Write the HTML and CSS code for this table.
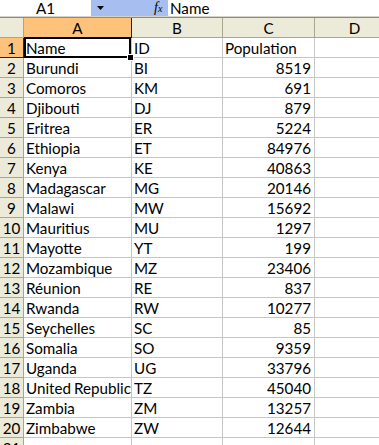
FILE: index.html
```html
<!DOCTYPE html>
<html>
<head>
<meta charset="utf-8">
<link rel="stylesheet" href="styles.css">
</head>
<body>
<div class="app">
  <div class="fbar">
    <div class="namebox">A1</div>
    <div class="fbtns">
      <svg class="arrow" width="7" height="4" viewBox="0 0 7 4"><path d="M0 0H7L3.5 4Z" fill="#000"/></svg>
      <span class="fx">f<span class="fxs">x</span></span>
    </div>
    <div class="finput">Name</div>
  </div>
  <div class="sheet">
    <div class="hc corner"></div><div class="hc col sel">A</div><div class="hc col">B</div><div class="hc col">C</div><div class="hc col">D</div>

    <div class="hc row sel">1</div><div class="c">Name</div><div class="c">ID</div><div class="c">Population</div><div class="c"></div>
    <div class="hc row">2</div><div class="c">Burundi</div><div class="c">BI</div><div class="c n">8519</div><div class="c"></div>
    <div class="hc row">3</div><div class="c">Comoros</div><div class="c">KM</div><div class="c n">691</div><div class="c"></div>
    <div class="hc row">4</div><div class="c">Djibouti</div><div class="c">DJ</div><div class="c n">879</div><div class="c"></div>
    <div class="hc row">5</div><div class="c">Eritrea</div><div class="c">ER</div><div class="c n">5224</div><div class="c"></div>
    <div class="hc row">6</div><div class="c">Ethiopia</div><div class="c">ET</div><div class="c n">84976</div><div class="c"></div>
    <div class="hc row">7</div><div class="c">Kenya</div><div class="c">KE</div><div class="c n">40863</div><div class="c"></div>
    <div class="hc row">8</div><div class="c">Madagascar</div><div class="c">MG</div><div class="c n">20146</div><div class="c"></div>
    <div class="hc row">9</div><div class="c">Malawi</div><div class="c">MW</div><div class="c n">15692</div><div class="c"></div>
    <div class="hc row">10</div><div class="c">Mauritius</div><div class="c">MU</div><div class="c n">1297</div><div class="c"></div>
    <div class="hc row">11</div><div class="c">Mayotte</div><div class="c">YT</div><div class="c n">199</div><div class="c"></div>
    <div class="hc row">12</div><div class="c">Mozambique</div><div class="c">MZ</div><div class="c n">23406</div><div class="c"></div>
    <div class="hc row">13</div><div class="c">Réunion</div><div class="c">RE</div><div class="c n">837</div><div class="c"></div>
    <div class="hc row">14</div><div class="c">Rwanda</div><div class="c">RW</div><div class="c n">10277</div><div class="c"></div>
    <div class="hc row">15</div><div class="c">Seychelles</div><div class="c">SC</div><div class="c n">85</div><div class="c"></div>
    <div class="hc row">16</div><div class="c">Somalia</div><div class="c">SO</div><div class="c n">9359</div><div class="c"></div>
    <div class="hc row">17</div><div class="c">Uganda</div><div class="c">UG</div><div class="c n">33796</div><div class="c"></div>
    <div class="hc row">18</div><div class="c">United Republic of Tanzania</div><div class="c">TZ</div><div class="c n">45040</div><div class="c"></div>
    <div class="hc row">19</div><div class="c">Zambia</div><div class="c">ZM</div><div class="c n">13257</div><div class="c"></div>
    <div class="hc row">20</div><div class="c">Zimbabwe</div><div class="c">ZW</div><div class="c n">12644</div><div class="c"></div>
    <div class="hc row">21</div><div class="c"></div><div class="c"></div><div class="c"></div><div class="c"></div>

    <div class="selbox"><div class="handle"></div></div>
  </div>
</div>
</body>
</html>
```
FILE: styles.css
```css
html, body {
  margin: 0;
  padding: 0;
  background: #fff;
  overflow: hidden;
}
.app {
  width: 379px;
  height: 445px;
  overflow: hidden;
  font-family: Lato, "Liberation Sans", sans-serif;
  font-size: 15.2px;
  color: #000;
}
.fbar {
  display: flex;
  height: 16px;
  border-bottom: 1px solid #d6d3ca;
  box-shadow: 0 1px 0 #8a8a8a;
  margin-bottom: 1px;
}
.namebox {
  width: 91px;
  background: #fff;
  text-align: center;
  line-height: 16px;
}
.fbtns {
  width: 77px;
  background: #a6bff0;
  display: flex;
  align-items: center;
  position: relative;
}
.arrow {
  margin-left: 6px;
}
.fx {
  margin-left: 50px;
  font-family: "Liberation Serif", serif;
  font-style: italic;
  font-size: 14px;
  line-height: 16px;
}
.fxs {
  font-size: 10px;
}
.finput {
  flex: 1;
  background: #fff;
  padding-left: 2px;
  line-height: 16px;
}
.sheet {
  position: relative;
  display: grid;
  grid-template-columns: 24px 108px 91px 92px 80px;
  grid-auto-rows: 20px;
}
.sheet > div {
  box-sizing: border-box;
  border-right: 1px solid #c6c6c6;
  border-bottom: 1px solid #c6c6c6;
  white-space: nowrap;
  overflow: hidden;
  line-height: 20px;
}
.sheet > .hc {
  background: #ecead9;
  border-right-color: #a9a690;
  border-bottom-color: #a9a690;
  text-align: center;
  color: #000;
}
.sheet > .hc.sel {
  background: #fec27b;
  border-right-color: #1c1c6e;
  border-bottom-color: #1c1c6e;
}
.c {
  padding-left: 2px;
  word-spacing: -1px;
}
.c.n {
  text-align: right;
  padding-right: 3px;
}
.selbox {
  position: absolute;
  left: 24px;
  top: 19px;
  width: 107px;
  height: 21px;
  box-sizing: border-box;
  border: 2px solid #000 !important;
  overflow: visible !important;
}
.handle {
  position: absolute;
  right: -4px;
  bottom: -4px;
  width: 5px;
  height: 5px;
  background: #000;
  box-shadow: 0 0 0 1px #fff;
}
```
